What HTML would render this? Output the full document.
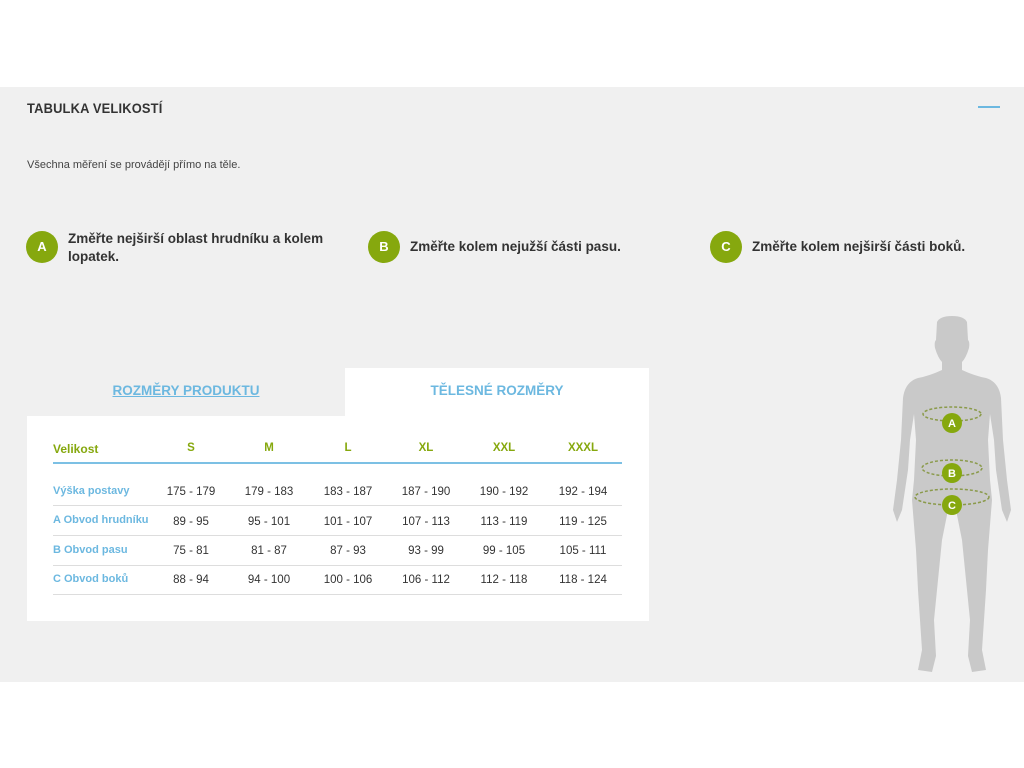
<!DOCTYPE html>
<html><head><meta charset="utf-8"><style>
*{margin:0;padding:0;box-sizing:border-box}
body{width:1024px;height:768px;background:#fff;font-family:"Liberation Sans",sans-serif;position:relative;overflow:hidden}
.bg{position:absolute;left:0;top:87px;width:1024px;height:595px;background:#f0f0f0}
.abs{position:absolute}
h1{position:absolute;left:27px;top:100px;font-size:14px;font-weight:bold;color:#333;letter-spacing:0.2px;transform:scaleX(0.92);transform-origin:left}
.dash{left:978px;top:106px;width:22px;height:2px;background:#6cb8e0}
.note{left:27px;top:159px;font-size:11px;color:#444}
.circ{width:32px;height:32px;border-radius:50%;background:#86a80e;color:#fff;font-weight:bold;font-size:13px;text-align:center;line-height:32px}
.step{font-size:13.5px;font-weight:bold;color:#333;line-height:18px}
.tab{font-size:13.5px;font-weight:bold;color:#6cb8e0;text-align:center}
.box{left:27px;top:416px;width:622px;height:205px;background:#fff}
.tabon{left:345px;top:368px;width:304px;height:48px;background:#fff}
.c{position:absolute;font-size:11.5px;color:#333;text-align:center;width:80px;margin-left:-40px}
.h{color:#86a80e;font-weight:bold}
.lab{position:absolute;left:53px;font-size:11px;font-weight:bold;color:#6cb8e0}
.ln{position:absolute;left:53px;width:569px;height:1px;background:#ddd}
</style></head><body>
<div class="bg"></div>
<h1>TABULKA VELIKOSTÍ</h1>
<div class="abs dash"></div>
<div class="abs note">Všechna měření se provádějí přímo na těle.</div>
<div class="abs circ" style="left:26px;top:231px">A</div>
<div class="abs step" style="left:68px;top:230px;width:262px">Změřte nejširší oblast hrudníku a kolem lopatek.</div>
<div class="abs circ" style="left:368px;top:231px">B</div>
<div class="abs step" style="left:410px;top:238px">Změřte kolem nejužší části pasu.</div>
<div class="abs circ" style="left:710px;top:231px">C</div>
<div class="abs step" style="left:752px;top:238px">Změřte kolem nejširší části boků.</div>

<div class="abs tabon"></div>
<div class="abs box"></div>
<div class="abs tab" style="left:27px;top:383px;width:318px;text-decoration:underline">ROZMĚRY PRODUKTU</div>
<div class="abs tab" style="left:345px;top:383px;width:304px">TĚLESNÉ ROZMĚRY</div>

<div class="lab" style="top:442px;color:#86a80e;font-size:12px">Velikost</div>
<div class="abs" style="left:53px;top:462px;width:569px;height:2px;background:#7cc0e4"></div>
<div class="c h" style="left:191px;top:442px">S</div>
<div class="c h" style="left:269px;top:442px">M</div>
<div class="c h" style="left:348px;top:442px">L</div>
<div class="c h" style="left:426px;top:442px">XL</div>
<div class="c h" style="left:504px;top:442px">XXL</div>
<div class="c h" style="left:583px;top:442px">XXXL</div>

<div class="lab" style="top:485px">Výška postavy</div>
<div class="lab" style="top:514px">A Obvod hrudníku</div>
<div class="lab" style="top:544px">B Obvod pasu</div>
<div class="lab" style="top:573px">C Obvod boků</div>
<div class="ln" style="top:505px"></div><div class="ln" style="top:535px"></div><div class="ln" style="top:565px"></div><div class="ln" style="top:594px"></div>

<div class="c" style="left:191px;top:486px">175 - 179</div><div class="c" style="left:269px;top:486px">179 - 183</div><div class="c" style="left:348px;top:486px">183 - 187</div><div class="c" style="left:426px;top:486px">187 - 190</div><div class="c" style="left:504px;top:486px">190 - 192</div><div class="c" style="left:583px;top:486px">192 - 194</div>
<div class="c" style="left:191px;top:516px">89 - 95</div><div class="c" style="left:269px;top:516px">95 - 101</div><div class="c" style="left:348px;top:516px">101 - 107</div><div class="c" style="left:426px;top:516px">107 - 113</div><div class="c" style="left:504px;top:516px">113 - 119</div><div class="c" style="left:583px;top:516px">119 - 125</div>
<div class="c" style="left:191px;top:545px">75 - 81</div><div class="c" style="left:269px;top:545px">81 - 87</div><div class="c" style="left:348px;top:545px">87 - 93</div><div class="c" style="left:426px;top:545px">93 - 99</div><div class="c" style="left:504px;top:545px">99 - 105</div><div class="c" style="left:583px;top:545px">105 - 111</div>
<div class="c" style="left:191px;top:574px">88 - 94</div><div class="c" style="left:269px;top:574px">94 - 100</div><div class="c" style="left:348px;top:574px">100 - 106</div><div class="c" style="left:426px;top:574px">106 - 112</div><div class="c" style="left:504px;top:574px">112 - 118</div><div class="c" style="left:583px;top:574px">118 - 124</div>

<svg class="abs" style="left:880px;top:310px" width="144" height="370" viewBox="0 0 144 370">
<g fill="#c9c9c9">
<path d="M57 12 Q60 6 72 6 Q84 6 87 12 L88 30 Q90 32 89 38 Q86 48 82 52 L82 60 Q95 66 106 68 Q119 72 121 88 L123 130 Q125 150 127 170 L131 200 L127 212 L122 200 L116 160 L114 130 L110 104 L108 130 L110 170 L112 190 L108 240 L106 280 L104 310 L102 340 L106 360 L92 362 L88 346 L90 310 L86 270 L82 230 L76 200 L72 196 L68 200 L62 230 L58 270 L54 310 L56 346 L52 362 L38 360 L42 340 L40 310 L38 280 L36 240 L32 190 L34 170 L36 130 L34 104 L30 130 L28 160 L22 200 L17 212 L13 200 L17 170 L19 150 L21 130 L23 88 Q25 72 38 68 Q49 66 62 60 L62 52 Q58 48 55 38 Q54 32 56 30 Z"/>
</g>
<g fill="none" stroke="#8a9a4a" stroke-width="1.5" stroke-dasharray="3 2">
<ellipse cx="72" cy="104" rx="29" ry="7"/>
<ellipse cx="72" cy="158" rx="30" ry="8"/>
<ellipse cx="72" cy="187" rx="37" ry="8"/>
</g>
<g fill="#86a80e"><circle cx="72" cy="113" r="10"/><circle cx="72" cy="163" r="10"/><circle cx="72" cy="195" r="10"/></g>
<g fill="#fff" font-family="Liberation Sans" font-weight="bold" font-size="11" text-anchor="middle"><text x="72" y="117">A</text><text x="72" y="167">B</text><text x="72" y="199">C</text></g>
</svg>
</body></html>
